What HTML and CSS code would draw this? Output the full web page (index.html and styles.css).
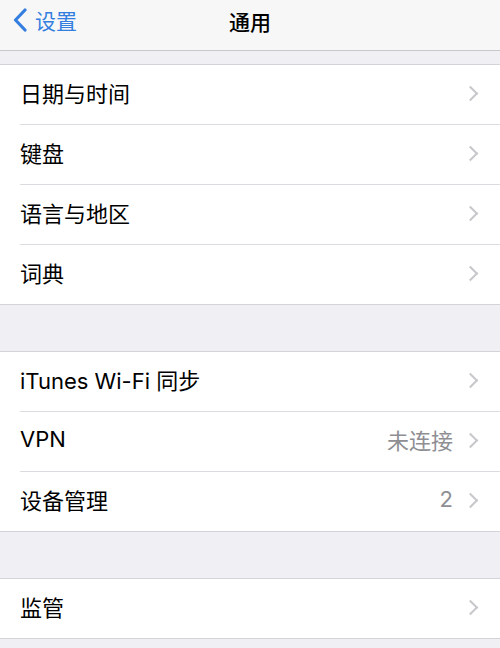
FILE: index.html
```html
<!DOCTYPE html>
<html lang="zh-CN">
<head>
    <meta charset="utf-8">
    <title>通用</title>
    <link rel="stylesheet" href="styles.css">
</head>
<body>
    <div class="navbar">
        <div class="back">
            <svg class="back-icon" width="16" height="24" viewBox="0 0 16 24">
                <path d="M13 2 L3.5 12 L13 22" fill="none" stroke="#347ee0" stroke-width="3.2" stroke-linecap="round" stroke-linejoin="round"/>
            </svg>
            <span>设置</span>
        </div>
        <div class="title">通用</div>
    </div>

    <div class="group first">
        <div class="row"><div class="row-body"><span class="label">日期与时间</span><span class="chev"></span></div></div>
        <div class="row"><div class="row-body"><span class="label">键盘</span><span class="chev"></span></div></div>
        <div class="row"><div class="row-body"><span class="label">语言与地区</span><span class="chev"></span></div></div>
        <div class="row"><div class="row-body"><span class="label">词典</span><span class="chev"></span></div></div>
    </div>

    <div class="group">
        <div class="row"><div class="row-body"><span class="label">iTunes Wi-Fi 同步</span><span class="chev"></span></div></div>
        <div class="row"><div class="row-body"><span class="label">VPN</span><span class="value">未连接</span><span class="chev"></span></div></div>
        <div class="row"><div class="row-body"><span class="label">设备管理</span><span class="value">2</span><span class="chev"></span></div></div>
    </div>

    <div class="group">
        <div class="row"><div class="row-body"><span class="label">监管</span><span class="chev"></span></div></div>
    </div>
</body>
</html>
```

FILE: styles.css
```css
body{
    margin: 0;
    padding: 0;
    background-color: #efeff4;
    font-family: "Inter", "Noto Sans CJK SC", sans-serif;
    color: #000000;
    overflow: hidden;
}

.navbar{
    position: relative;
    height: 51px;
    box-sizing: border-box;
    padding-bottom: 8px;
    background-color: #f7f7f8;
    border-bottom: 1px solid #c8c8cc;
    display: flex;
    align-items: center;
    justify-content: center;
}
.back{
    position: absolute;
    left: 12px;
    top: 5px;
    display: flex;
    align-items: center;
    gap: 7px;
    color: #347ee0;
    font-size: 21px;
}
.back-icon{
    display: block;
}
.title{
    font-size: 21px;
    font-weight: 500;
}

.group{
    margin-top: 46px;
    background-color: #ffffff;
    border-top: 1px solid #d4d4d8;
    border-bottom: 1px solid #d4d4d8;
}
.group.first{
    margin-top: 13px;
}

.row{
    padding-left: 20px;
}
.row-body{
    height: 60px;
    box-sizing: border-box;
    padding-bottom: 5px;
    display: flex;
    align-items: center;
    padding-right: 22px;
    border-bottom: 1px solid #dcdce0;
}
.row:last-child .row-body{
    height: 59px;
    border-bottom: none;
}
.label{
    flex: 1;
    font-size: 22px;
}
.value{
    font-size: 22px;
    color: #8e8e93;
    margin-right: 12px;
}
.chev{
    width: 9px;
    height: 9px;
    border-top: 2px solid #c7c7cc;
    border-right: 2px solid #c7c7cc;
    transform: rotate(45deg);
    margin-right: 2px;
    margin-top: 3px;
}
```
